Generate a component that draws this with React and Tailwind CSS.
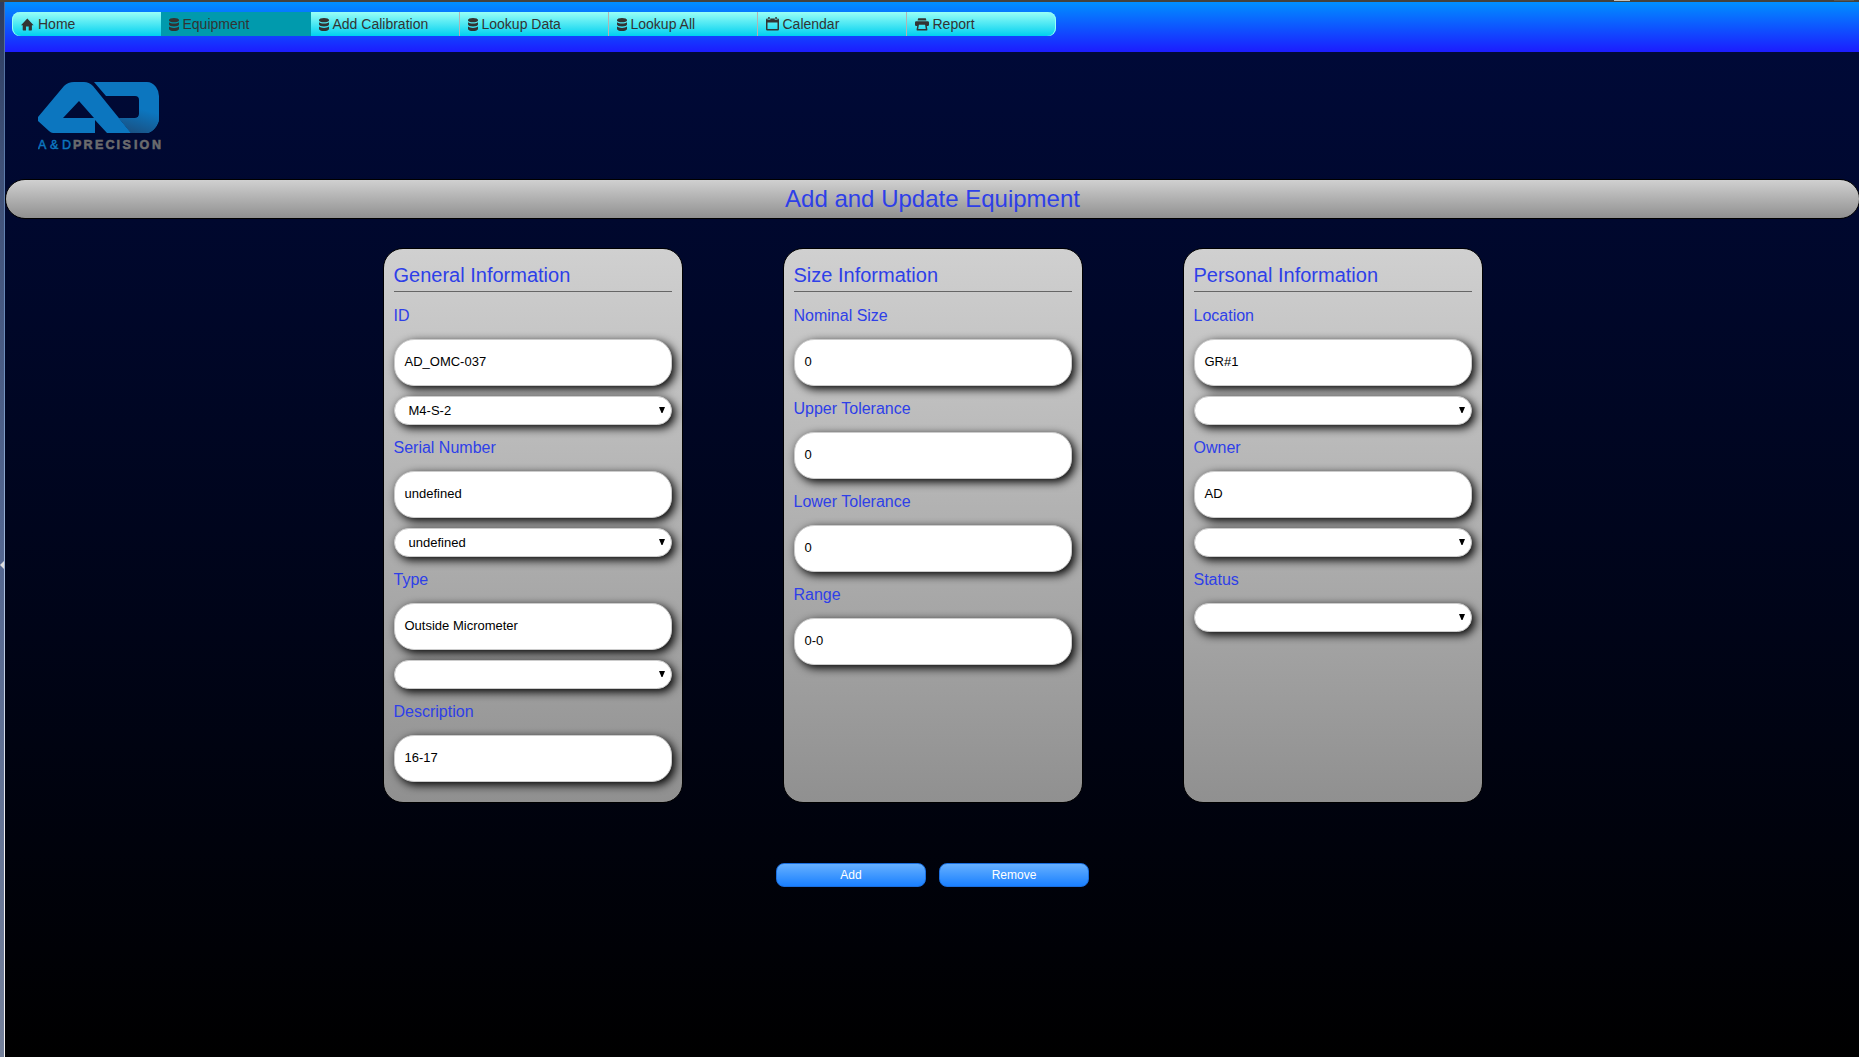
import React from "react";

const HomeIcon = () => (
  <svg width="13" height="13" viewBox="0 0 13 13" fill="#333" className="ml-px mr-[4px]">
    <path d="M6.300.4L12.600 7.200h-1.700v4.600a.6.600 0 0 1-.6.600H7.700V8.500H5v3.900H2.300a.6.600 0 0 1-.6-.6V7.200H0z" />
  </svg>
);
const DatabaseIcon = () => (
  <svg width="10" height="13" viewBox="0 0 10 13" fill="#333" className="mr-[3.5px]">
    <path d="M0 1.900C0 .8 2.200 0 5 0s5 .8 5 1.900v.6C10 3.500 7.800 4.300 5 4.300S0 3.500 0 2.500z" />
    <path d="M0 4.300C1 5.100 2.800 5.600 5 5.600s4-.5 5-1.300v2.300C10 7.700 7.800 8.600 5 8.600S0 7.700 0 6.600z" />
    <path d="M0 8.500C1 9.400 2.800 9.900 5 9.900s4-.5 5-1.400v2.400C10 12.100 7.800 13 5 13s-5-.9-5-2.100z" />
  </svg>
);
const CalendarIcon = () => (
  <svg width="13" height="14" viewBox="0 0 13 14" fill="#333" className="mb-px mr-[3.5px]">
    <path fillRule="evenodd" d="M2.200 0h1.500v2.500H2.200zM9.300 0h1.500v2.500H9.300zM1.200 1.500h.5V3h2.500V1.500h4.600V3h2.500V1.500h.5A1.200 1.200 0 0 1 13 2.700v9.600a1.200 1.200 0 0 1-1.200 1.200H1.200A1.200 1.200 0 0 1 0 12.300V2.700a1.200 1.200 0 0 1 1.200-1.200zM1.500 5.500v6.500h10V5.500z" />
  </svg>
);
const PrintIcon = () => (
  <svg width="14" height="13" viewBox="0 0 14 13" fill="#333" className="mr-[3.5px]">
    <path d="M3.500.3h7a.5.5 0 0 1 .5.500L11.400 2.600H2.600L3 .8A.5.5 0 0 1 3.500.3z" />
    <path fillRule="evenodd" d="M1.300 3.300h11.400A1.300 1.300 0 0 1 14 4.600v2.200a1.300 1.300 0 0 1-1.300 1.300h-.9l.6 3.500a.7.700 0 0 1-.7.900H2.300a.7.700 0 0 1-.7-.9l.6-3.500h-.9A1.300 1.300 0 0 1 0 6.800V4.600a1.300 1.300 0 0 1 1.300-1.300zM3.900 6.700L3.200 11h7.600l-.7-4.300z" />
  </svg>
);

const nav = [
  ["Home", HomeIcon, "w-[149px]"],
  ["Equipment", DatabaseIcon, "w-[150px] bg-[#009aad]"],
  ["Add Calibration", DatabaseIcon, "w-[149px] border-r border-[#b3b3b3]"],
  ["Lookup Data", DatabaseIcon, "w-[149px] border-r border-[#b3b3b3]"],
  ["Lookup All", DatabaseIcon, "w-[149px] border-r border-[#b3b3b3]"],
  ["Calendar", CalendarIcon, "w-[149px] border-r border-[#b3b3b3]"],
  ["Report", PrintIcon, "w-[149px]"],
];

const columns = [
  ["General Information", [
    ["ID", "AD_OMC-037", "M4-S-2"],
    ["Serial Number", "undefined", "undefined"],
    ["Type", "Outside Micrometer", ""],
    ["Description", "16-17", null],
  ]],
  ["Size Information", [
    ["Nominal Size", "0", null],
    ["Upper Tolerance", "0", null],
    ["Lower Tolerance", "0", null],
    ["Range", "0-0", null],
  ]],
  ["Personal Information", [
    ["Location", "GR#1", ""],
    ["Owner", "AD", ""],
    ["Status", null, ""],
  ]],
];

function Logo() {
  return (
    <svg width="126" height="70" viewBox="0 0 126 70" className="block">
      <defs>
        <linearGradient id="fold" x1="0.2" y1="1" x2="0.6" y2="0.1">
          <stop offset="0" stopColor="#1a4f80" />
          <stop offset="1" stopColor="#0c76bf" />
        </linearGradient>
      </defs>
      <path fill="#0c76bf" fillRule="evenodd" d="M0 35L26 4Q30 0 36 0H46Q51 0 55 4L93 51H69L57 38V51H15Q13 51 11 49L0 39ZM41 19L25 36H56Z" />
      <path fill="#0c76bf" d="M56 0H109Q114 0 118 5Q121 9 121 14V36Q121 41 117 46Q113 51 108 51H93L81 36H97Q101 36 101 32V18Q101 14 97 14H68Z" />
      <path fill="url(#fold)" d="M101 25H121V36Q121 41 117 46Q113 51 108 51H93L81 36H97Q101 36 101 32Z" />
      <g fontFamily="Liberation Sans" fontSize="12.500">
        <text x="0 12 24" y="67" fill="#0c76bf" stroke="#0c76bf" strokeWidth=".5">A&amp;D</text>
        <text x="35 45.500 57 67.500 78.500 84.500 96 101.500 114" y="67" fontWeight="700" fill="#6b6b6d" stroke="#6b6b6d" strokeWidth=".6">PRECISION</text>
      </g>
    </svg>
  );
}

const Input = ({ value }) => (
  <div className="mb-[10px] flex h-[47px] items-center rounded-[20px] border border-[#ccc] bg-white px-[10px] pb-[2px] text-[13px] text-black shadow-[3px_3px_10px_#000]">
    {value}
  </div>
);

const Select = ({ value }) => (
  <div className="mb-[10px] flex h-[29px] items-center justify-between rounded-[20px] border border-[#ccc] bg-white pr-[6px] pl-[14px] text-[13px] text-black shadow-[3px_3px_10px_#000]">
    <span>{value}</span>
    <svg width="6" height="6" viewBox="0 0 6 6" className="mb-px"><path d="M0 0h6L3.500 6h-1z" /></svg>
  </div>
);

export default function App() {
  return (
    <div className="flex h-[1057px] w-full flex-col overflow-hidden font-['Liberation_Sans',Arial,sans-serif]">
      <div className="flex h-[2px] shrink-0 bg-[#44423c]">
        <div className="ml-[1614px] h-px w-4 bg-[#c4c2bc]" />
        <div className="ml-[204px] h-px w-5 bg-[#5a5852]" />
      </div>
      <div className="flex min-h-0 flex-1">
        <div className="flex w-[4px] shrink-0 items-center bg-[linear-gradient(#2c3c60,#3f5077_15%,#52658f_50%,#74809a)]">
          <svg width="4" height="8" viewBox="0 0 4 8" className="mb-[-70px] shrink-0"><path fill="#ddd" d="M4 0v8L0 4z" /></svg>
        </div>
        <div className="w-px shrink-0 bg-[linear-gradient(#4f6c9c,#6f8fbd_35%,#a9bede_55%,#f2f2f2_80%)]" />
        <div className="min-w-0 flex-1 overflow-hidden bg-[linear-gradient(#000a3a,#000)]">
          <header className="h-[50px] bg-[linear-gradient(#0090ff,#1c1cff)] pt-[10px] pl-[7px]">
            <nav className="flex h-6 w-[1044px] overflow-hidden rounded-[8px] bg-[linear-gradient(#99fff6,#00d0f0)] shadow-[inset_1px_0_0_#99fff6,inset_-1px_0_0_#99fff6]">
              {nav.map(([label, Icon, cls]) => (
                <a key={label} className={"flex items-center pl-[8px] text-[14px] text-[#333] " + cls}>
                  <Icon />
                  <span>{label}</span>
                </a>
              ))}
            </nav>
          </header>
          <div className="pt-[30px] pl-[33px]"><Logo /></div>
          <h1 className="mt-[27px] -mr-px flex h-[40px] items-center justify-center rounded-[20px] border border-black bg-[linear-gradient(#d0d0d0,#909090)] text-[24px] text-[#2e3fe8]">
            Add and Update Equipment
          </h1>
          <main className="mt-[29px] -mr-px flex justify-center gap-[100px]">
            {columns.map(([title, fields]) => (
              <section key={title} className="h-[555px] w-[300px] rounded-[20px] border border-black bg-[linear-gradient(#d0d0d0,#909090)] px-[10px] pt-[9px] text-[#2e3fe8]">
                <h2 className="mb-[10px] flex h-[34px] items-center border-b border-[#666] text-[20px]">{title}</h2>
                {fields.map(([label, input, select]) => (
                  <div key={label} className="-mb-px">
                    <div className="flex h-[37px] items-start pt-[4px] text-[16px] leading-[20px]">{label}</div>
                    {input !== null && <Input value={input} />}
                    {select !== null && <Select value={select} />}
                  </div>
                ))}
              </section>
            ))}
          </main>
          <div className="mt-[60px] -mr-px flex justify-center gap-[13px]">
            {["Add", "Remove"].map((t) => (
              <button key={t} className="h-6 w-[150px] rounded-[8px] border border-[#1a6fe0] bg-[linear-gradient(#66b0ff,#1a80ff)] text-[12px] leading-none text-white">{t}</button>
            ))}
          </div>
        </div>
      </div>
    </div>
  );
}
